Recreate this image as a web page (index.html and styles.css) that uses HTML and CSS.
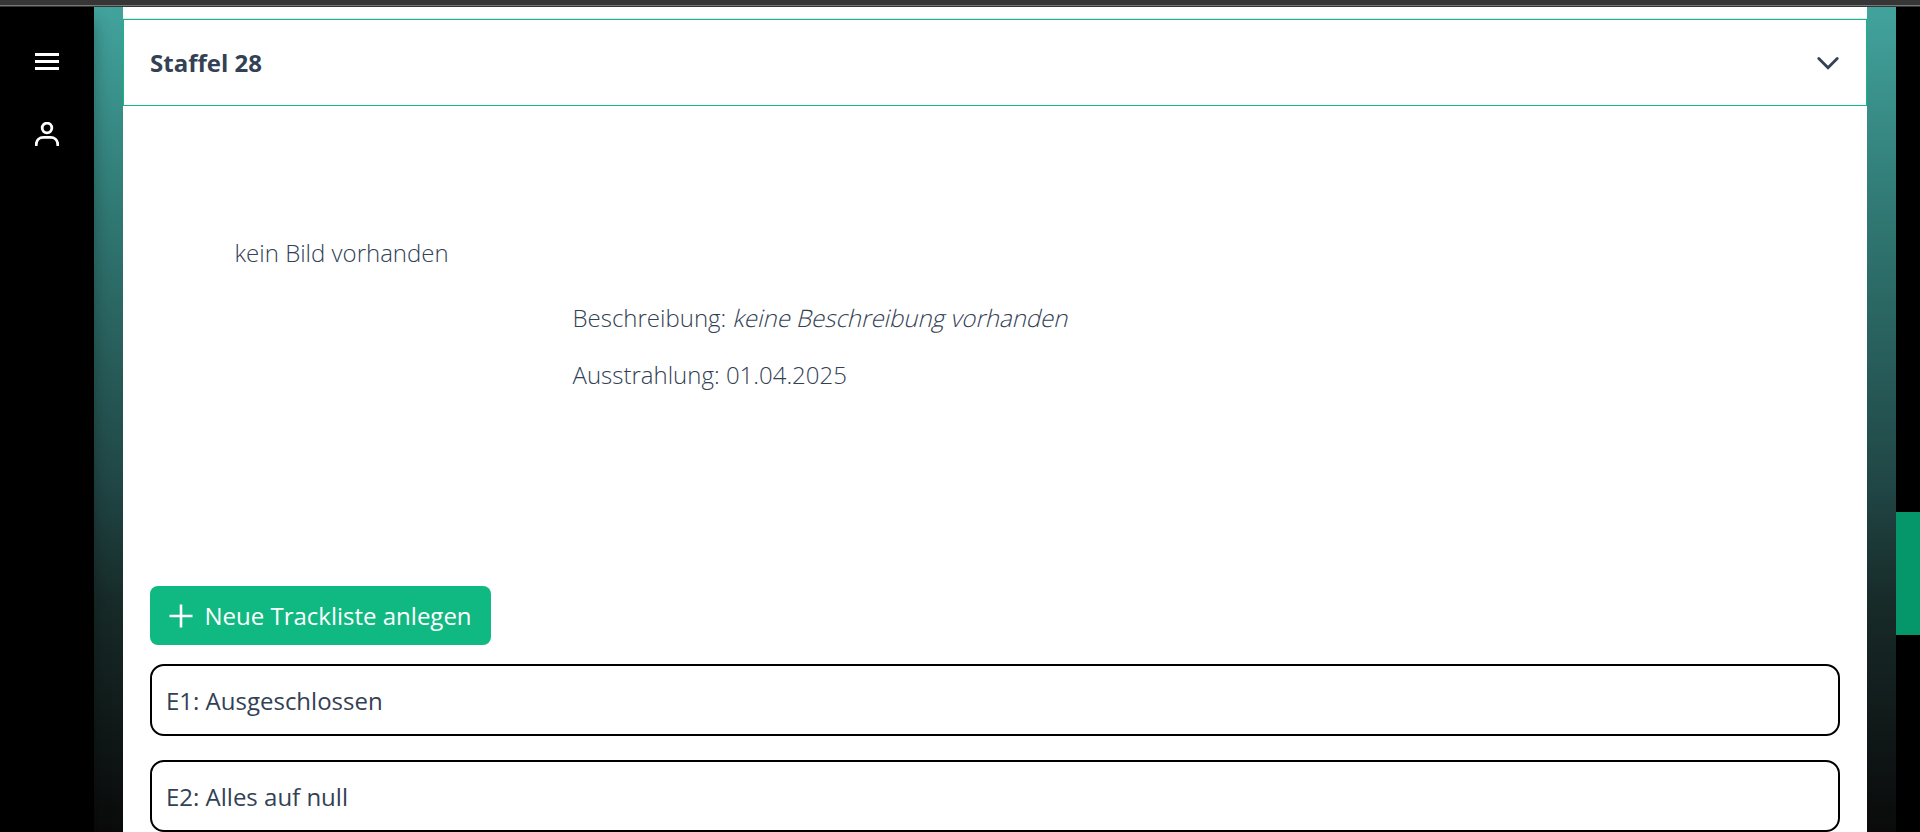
FILE: index.html
```html
<!DOCTYPE html>
<html lang="de">
<head>
<meta charset="utf-8">
<title>Staffel 28</title>
<link rel="stylesheet" href="styles.css">
</head>
<body>
<div class="topbar"></div>
<div class="app">
  <nav class="sidebar">
    <svg class="nav-icon" viewBox="0 0 24 24"><path d="M0 4.500H24M0 11.500H24M0 18.500H24"/></svg>
    <svg class="nav-icon" viewBox="0 0 24 24"><circle cx="12" cy="6" r="4.800"/><path d="M1.300 23V22.300C1.300 18 4.500 15.300 8.500 15.300H15.500C19.500 15.300 22.700 18 22.700 22.300V23"/></svg>
  </nav>
  <main class="content">
    <section class="panel">
      <header class="panel-header">
        <h2>Staffel 28</h2>
        <svg class="chevron" viewBox="0 0 22 14"><path d="M1.800 2.500L11 11.800L20.200 2.500"/></svg>
      </header>
      <div class="panel-body">
        <div class="season">
          <div class="season-image">kein Bild vorhanden</div>
          <div class="season-info">
            <p>Beschreibung: <em>keine Beschreibung vorhanden</em></p>
            <p>Ausstrahlung: 01.04.2025</p>
          </div>
        </div>
        <button class="add-button"><svg class="plus" viewBox="0 0 24 24"><path d="M0.500 12H23.500M12 0.500V23.500"/></svg><span>Neue Trackliste anlegen</span></button>
        <div class="episode">E1: Ausgeschlossen</div>
        <div class="episode">E2: Alles auf null</div>
      </div>
    </section>
  </main>
  <aside class="rail"><div class="rail-tab"></div></aside>
</div>
</body>
</html>
```

FILE: styles.css
```css
* { box-sizing: border-box; }
body {
  margin: 0;
  height: 832px;
  overflow: hidden;
  display: flex;
  flex-direction: column;
  font-family: "Open Sans", sans-serif;
  font-size: 24px;
  line-height: 36px;
  color: #334155;
}
.topbar {
  height: 7px;
  flex: none;
  background: linear-gradient(#363636 5px, #777 5px, #777 6px, #363636 6px);
}
.app { flex: 1; min-height: 0; display: flex; }
.sidebar {
  width: 94px;
  padding-top: 43px;
  background: #000;
  display: flex;
  flex-direction: column;
  align-items: center;
  gap: 48px;
  box-shadow: 0 14px 16px rgba(0, 0, 0, 0.3);
  clip-path: inset(0 -29px 0 0);
  z-index: 1;
}
.nav-icon {
  width: 24px;
  height: 24px;
  fill: none;
  stroke: #fff;
  stroke-width: 2.8;
  stroke-linecap: round;
}
.content {
  flex: 1;
  padding: 0 29px;
  background: linear-gradient(#42a39d, #307873 25%, #204645 58%, #172b29 72%, #0a0a0a);
}
.panel { height: 825px; padding-top: 12px; background: #fff; overflow: hidden; }
.panel-header {
  height: 87px;
  padding: 0 27px 0 26px;
  border: 1px solid #10b981;
  box-shadow: 0 -1px #e2e8f0;
  display: flex;
  align-items: center;
  justify-content: space-between;
}
h2 { margin: 0; font-size: 24px; font-weight: 700; }
.chevron { width: 22px; height: 14px; fill: none; stroke: #334155; stroke-width: 2.8; stroke-linecap: round; }
.panel-body { padding: 0 27px; }
.season { height: 480px; display: flex; font-weight: 300; }
.season-image { width: 422px; padding: 129px 0 0 84.5px; }
.season-info { padding: 194px 0 0 0.5px; }
.season-info p { margin: 0 0 21px; }
/* slanted upright letters instead of the true italic cut */
.season-info em {
  display: inline-block;
  font-style: normal;
  transform: skewX(-14deg);
  transform-origin: 0 27px;
}
.add-button {
  width: 341px;
  height: 59px;
  margin: 0 0 19px;
  padding: 0 19px;
  border: 0;
  border-radius: 8px;
  background: #10b981;
  color: #fff;
  font: inherit;
  font-weight: 430;
  white-space: nowrap;
  display: flex;
  align-items: center;
  gap: 11.5px;
}
.plus { width: 24px; height: 24px; flex: none; fill: none; stroke: #fff; stroke-width: 2.6; }
.episode {
  height: 72px;
  margin-bottom: 24px;
  padding: 2px 14px 0;
  border: 2px solid #000;
  border-radius: 14px;
  display: flex;
  align-items: center;
}
.rail { width: 24px; padding-top: 505px; background: #000; }
.rail-tab { height: 123px; background: #059669; }
```
